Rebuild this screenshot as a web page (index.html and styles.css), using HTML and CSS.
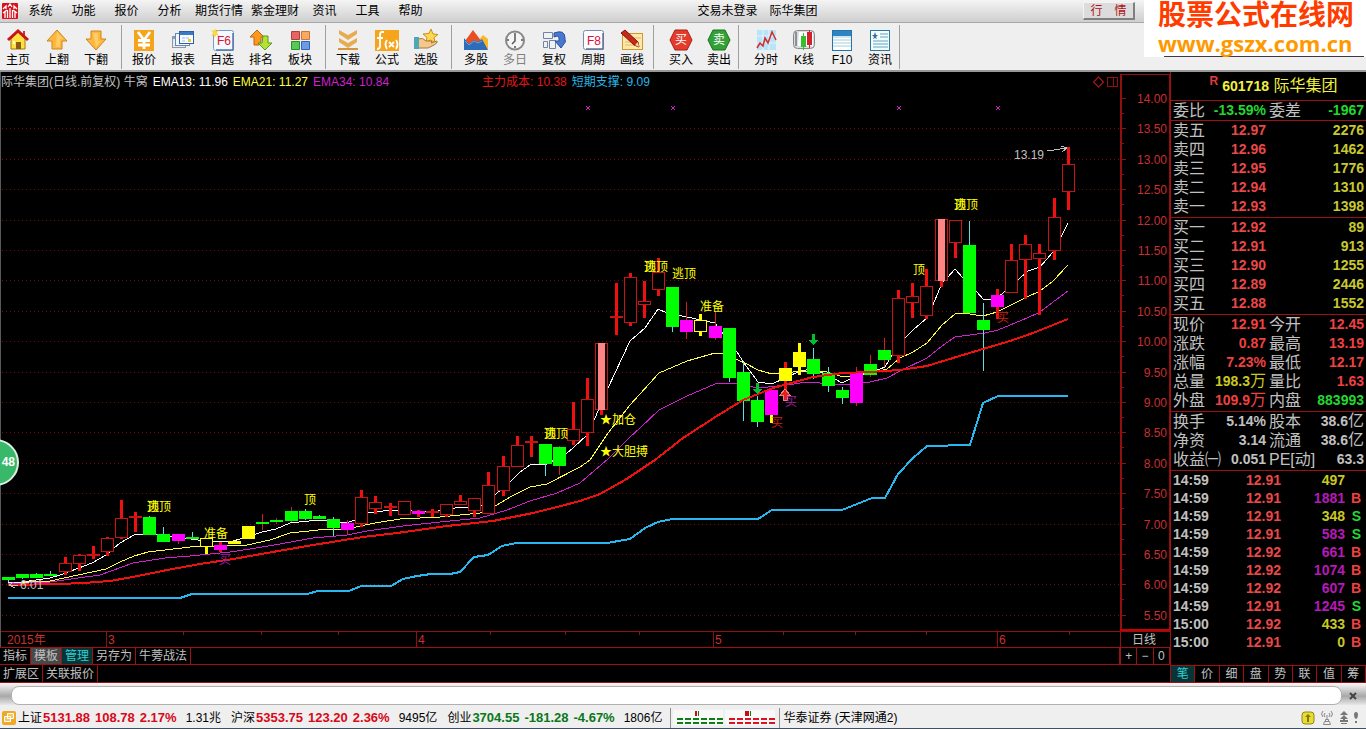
FILE: index.html
```
<!DOCTYPE html>
<html lang="zh-CN">
<head>
    <meta charset="UTF-8">
    <meta name="viewport" content="width=device-width, initial-scale=1.0">
    <title>际华集团 601718</title>
    <link rel="stylesheet" href="styles.css">
</head>
<body>
    <header class="menubar">
        <nav class="menu">
            <svg class="logo" viewBox="0 0 16 16" width="16" height="16">
                <rect width="16" height="16" rx="1" fill="#d8101c"/>
                <path d="M1 6l3-3v3M12 6V3l3 3M6 4l2-3 2 3M3 8v7M5.500 7v8M8 5v10M10.500 7v8M13 8v7M1 10l4-3M15 10l-4-3" fill="none" stroke="#fff" stroke-width="1.300"/>
            </svg>
            <a href="#">系统</a>
            <a href="#">功能</a>
            <a href="#">报价</a>
            <a href="#">分析</a>
            <a href="#">期货行情</a>
            <a href="#">紫金理财</a>
            <a href="#">资讯</a>
            <a href="#">工具</a>
            <a href="#">帮助</a>
        </nav>
        <div class="window-title"><span>交易未登录</span><span>际华集团</span></div>
        <button class="quote-btn" type="button">行　情</button>
    </header>

    <div class="toolbar">
        <div class="tool-group first">
            <button class="tool" type="button">
                <svg viewBox="0 0 24 24"><path d="M5 11v10h14V11l-7-7z" fill="#ffe23c" stroke="#a87808"/><path d="M10 21v-7h5v7z" fill="#8c5a14"/><path d="M7 13h2v3H7z" fill="#fff"/><path d="M17 3h2v5h-2z" fill="#c33"/><path d="M2 12L12 3l10 9" fill="none" stroke="#c8141c" stroke-width="3"/></svg>
                <span>主页</span>
            </button>
            <button class="tool" type="button">
                <svg viewBox="0 0 24 24"><path d="M12 2l10 11h-5v8H7v-8H2z" fill="#ffb83c" stroke="#d08418" stroke-linejoin="round"/><path d="M12 4l6 7h-3v8h-4z" fill="#ffd888" opacity=".6"/></svg>
                <span>上翻</span>
            </button>
            <button class="tool" type="button">
                <svg viewBox="0 0 24 24"><path d="M12 22L2 11h5V3h10v8h5z" fill="#ffb83c" stroke="#d08418" stroke-linejoin="round"/><path d="M9 5h5v8h3l-5 6z" fill="#ffd888" opacity=".6"/></svg>
                <span>下翻</span>
            </button>
        </div>
        <div class="tool-group">
            <button class="tool" type="button">
                <svg viewBox="0 0 24 24"><rect x="2" y="2" width="20" height="21" fill="#f6a41c"/><path d="M6 4l6 8 6-8M12 11v10M6 12.500h12M6 17h12" fill="none" stroke="#fff" stroke-width="2.800"/></svg>
                <span>报价</span>
            </button>
            <button class="tool" type="button">
                <svg viewBox="0 0 24 24"><rect x="1.500" y="8.500" width="13" height="11" fill="#e8ecf0" stroke="#8a98a8"/><path d="M2 9h12v2H2z" fill="#8aa0b8"/><rect x="4.500" y="5.500" width="14" height="12" fill="#f4f8fc" stroke="#6888b0"/><rect x="8.500" y="3.500" width="14" height="12" fill="#f8fcff" stroke="#2c60a8"/><path d="M9 4h13v3H9z" fill="#3c78c8"/><path d="M11 9h3v2h-3zM15 9h3v2h-3zM11 12h3v2h-3z" fill="#c8dcf4"/><path d="M17 11h3v3h-3z" fill="#f4c040"/></svg>
                <span>报表</span>
            </button>
            <button class="tool" type="button">
                <svg viewBox="0 0 24 24"><rect x="3.500" y="2.500" width="20" height="20" rx="2" fill="#f4f9ff" stroke="#7c9cc0"/><path d="M23 5v17H6" fill="none" stroke="#4c78ac" stroke-width="1.500"/><text x="7" y="17" class="key-text">F6</text><path d="M5 0l1 3 3-1-2 3 2 3-3-1-1 3-1-3-3 1 2-3-2-3 3 1z" fill="#ffd83c"/></svg>
                <span>自选</span>
            </button>
            <button class="tool" type="button">
                <svg viewBox="0 0 24 24"><path d="M8 2l7 7h-3v4l-2 4H5V9H1z" fill="#ff9818" stroke="#b8641c"/><path d="M14 8h5v7h4l-7 7-7-7h4z" fill="#b4e038" stroke="#58981c" stroke-linejoin="round"/></svg>
                <span>排名</span>
            </button>
            <button class="tool" type="button">
                <svg viewBox="0 0 24 24"><path d="M3.500 3.500h8v8h-8z" fill="#e86464" stroke="#b43c3c"/><path d="M13.500 3.500h8v8h-8z" fill="#f8a860" stroke="#c87830"/><path d="M3.500 13.500h8v8h-8z" fill="#58c858" stroke="#289028"/><path d="M13.500 13.500h8v8h-8z" fill="#6c9ce8" stroke="#3464b4"/></svg>
                <span>板块</span>
            </button>
        </div>
        <div class="tool-group">
            <button class="tool" type="button">
                <svg viewBox="0 0 24 24"><path d="M3 2l9 5 9-5v4l-9 6-9-6zM3 10l9 5 9-5v4l-9 6-9-6z" fill="#e8ac50"/><path d="M2 20h20v2H2z" fill="#d89438"/></svg>
                <span>下载</span>
            </button>
            <button class="tool" type="button">
                <svg viewBox="0 0 24 24"><rect y="2" width="24" height="21" fill="#f6a41c"/><path d="M9 4H7Q5 4 5 7v11q0 3-3 3M2 10h6M12 12q-3 4 0 9M21 12q3 4 0 9M14 14l5 5M19 14l-5 5" fill="none" stroke="#fff" stroke-width="1.800"/></svg>
                <span>公式</span>
            </button>
            <button class="tool" type="button">
                <svg viewBox="0 0 24 24"><path d="M17 1l2 5 5 .5-4 3 1 5-4.500-2.500L12 14l1-4.500-4-3.500 6-.500z" fill="#ffd850" stroke="#c89018"/><path d="M4 11q5-2 8 2h5q2 1 0 2l6-2q1 2-3 4l-6 3H4z" fill="#f4c88c" stroke="#a87840"/><path d="M0 9h5v12H0z" fill="#4ca8b8"/></svg>
                <span>选股</span>
            </button>
        </div>
        <div class="tool-group end-tight">
            <button class="tool" type="button">
                <svg viewBox="0 0 24 24"><path d="M13 14l6-7 5 4v10h-8z" fill="#f8b828"/><path d="M1 13l8-11 9 12v6H2z" fill="#e85024"/><path d="M0 10l5 6 5-4 4 2 4-3 6 11H0z" fill="#2c6cb8"/><path d="M1 13l4 4 5-4 4 2 4-2" fill="none" stroke="#6ca4e0"/></svg>
                <span>多股</span>
            </button>
            <button class="tool disabled" type="button">
                <svg viewBox="0 0 24 24"><circle cx="12" cy="12.500" r="9" fill="#f4f4f4" stroke="#888" stroke-width="2"/><path d="M12 6v7l-3 3M12 5v2M12 18v2M4 12h2M18 12h2" fill="none" stroke="#555" stroke-width="1.500"/></svg>
                <span>多日</span>
            </button>
            <button class="tool" type="button">
                <svg viewBox="0 0 24 24"><path d="M1.500 4.500h9v6h-9zM1.500 13.500h4v6h-4zM7.500 12.500h6v8h-6z" fill="#eef2f8" stroke="#7484a0"/><path d="M12 5q11-4 11 5v3h1l-5 7-6-7h4v-3q0-3-5-1z" fill="#4878d0" stroke="#2c50a0"/></svg>
                <span>复权</span>
            </button>
            <button class="tool" type="button">
                <svg viewBox="0 0 24 24"><rect x="2.500" y="2.500" width="20" height="19" rx="2" fill="#fafcff" stroke="#7c8ca8"/><path d="M22 5v16H5" fill="none" stroke="#5c7098" stroke-width="1.500"/><text x="6" y="17" class="key-text">F8</text></svg>
                <span>周期</span>
            </button>
            <button class="tool" type="button">
                <svg viewBox="0 0 24 24"><rect x="2.500" y="5.500" width="20" height="16" fill="#ffe8a8" stroke="#d0982c"/><path d="M5 14h12M5 17h14M9 10h12" stroke="#e0b860"/><path d="M1 5l4-3 13 12 1 5-5-2z" fill="#c8281c" stroke="#7c140c"/><path d="M15 17l4 2-1-5z" fill="#f8d8a0"/></svg>
                <span>画线</span>
            </button>
        </div>
        <div class="tool-group tight">
            <button class="tool" type="button">
                <svg viewBox="0 0 24 24"><path d="M6 2h12l5 10-5 10H6L1 12z" fill="#e43c2c" stroke="#a81c14"/><text x="6" y="16" class="sign-text">买</text></svg>
                <span>买入</span>
            </button>
            <button class="tool" type="button">
                <svg viewBox="0 0 24 24"><path d="M6 2h12l5 10-5 10H6L1 12z" fill="#34a038" stroke="#18701c"/><text x="6" y="16" class="sign-text">卖</text></svg>
                <span>卖出</span>
            </button>
        </div>
        <div class="tool-group tight">
            <button class="tool" type="button">
                <svg viewBox="0 0 24 24"><rect x="3" y="2" width="19" height="20" fill="#b8e4f8"/><path d="M9 2v20M15 2v20M3 8h19M3 15h19" stroke="#e4f6ff"/><path d="M3 20l3-5 3 3 2-8 3 5 4-11 4 8" fill="none" stroke="#d42c2c" stroke-width="1.500"/></svg>
                <span>分时</span>
            </button>
            <button class="tool" type="button">
                <svg viewBox="0 0 24 24"><rect x="1.500" y="2.500" width="21" height="18" rx="4" fill="#d8dce0" stroke="#888"/><path d="M7 4h14v14H6z" fill="#fff"/><path d="M9 8h5v11H9zM11 5h1v17h-1z" fill="#34c02c"/><path d="M15 4h5v13h-5zM17 2h1v18h-1z" fill="#d4202c"/><path d="M4 4v14" stroke="#444"/></svg>
                <span>K线</span>
            </button>
            <button class="tool" type="button">
                <svg viewBox="0 0 24 24"><rect x="2.500" y="2.500" width="19" height="20" fill="#fff" stroke="#2474ac"/><path d="M3 3h18v5H3z" fill="#2c84c0"/><path d="M3 12h18M3 15h18M3 18h18M3 9h18" stroke="#a4ccdc"/></svg>
                <span>F10</span>
            </button>
            <button class="tool" type="button">
                <svg viewBox="0 0 24 24"><rect x="2.500" y="2.500" width="19" height="20" fill="#f4fcff" stroke="#2c789c"/><path d="M12 6h8M12 9h8M5 13h15M5 16h15M5 19h15" stroke="#5ca4bc"/><path d="M7 4l1 3h2L8 9l1 2-2-1-2 1 1-2-2-2h2z" fill="#386c9c"/></svg>
                <span>资讯</span>
            </button>
        </div>
    </div>

    <main class="workspace">
        <section class="chart-pane">
            <div class="chart-legend">
                <span class="gray">际华集团(日线.前复权) 牛窝</span>
                <span class="white">EMA13: 11.96</span>
                <span class="yellow">EMA21: 11.27</span>
                <span class="purple">EMA34: 10.84</span>
                <span class="cost">主力成本: 10.38</span>
                <span class="cyan">短期支撑: 9.09</span>
            </div>
            <svg class="chart" viewBox="0 72 1170 575">
                <g id="grid"></g>
                <path d="M0 631.500H1170M1120.500 647v-16M106.500 631v16M416.500 631v16M713.500 631v16M997.500 631v16M183.500 631v4M261.500 631v4M338.500 631v4M490.500 631v4M565.500 631v4M639.500 631v4M783.500 631v4M855.500 631v4M926.500 631v4M1069.500 631v4" class="frame"/>
                <path d="M1120.500 631V74.500H1169.500V631" class="frame"/>
                <path d="M1120.500 74v557" class="frame" stroke-width="2"/>
                <path d="M1120 630h50" stroke="#c00" stroke-width="2"/>
                <path d="M1098.500 77l5 5-5 5-5-5zM1107.500 77.500h10v9h-10zM1113.500 77v10" class="frame"/>
                <path d="M0.500 72v575" stroke="#585858"/>

                <polyline class="line ema34" points="8,584 50,582 78,578 100,575 133,563 165,558 190,556 230,552 250,549 280,544 313,538 347,535 367,531 403,526 440,522 480,518 507,510 530,501 557,493 580,483 608,459 630,437 640,428 659,410 687,396 715,384 732,383 758,388 787,385 807,382 820,383 843,385 870,382 887,378 900,371 927,358 942,346 955,337 985,333 998,330 1027,318 1040,312 1053,302 1068,291"/>
                <polyline class="line ema21" points="8,583 50,581 78,575 106,569 120,562 134,556 148,552 190,547 247,545 270,540 290,533 318,530 346,529 375,523 400,519 440,517 480,513 497,505 510,497 530,487 547,484 580,467 590,460 608,433 630,405 659,373 687,361 715,353 723,354 745,363 758,370 772,374 780,373 807,371 827,372 843,377 870,373 887,369 900,358 913,352 927,343 942,325 955,314 963,313 983,316 997,312 1027,297 1040,291 1053,281 1068,265"/>
                <polyline class="line ema13" points="8,583 22,582 50,578 63,574 92,563 106,555 120,543 134,535 148,534 177,537 205,541 233,541 247,537 262,532 276,529 290,523 318,520 346,523 361,518 368,513 390,510 433,512 460,507 480,507 497,493 510,482 520,472 530,465 547,464 567,453 573,448 587,435 595,418 608,388 630,341 645,328 658,309 667,313 687,317 715,323 723,334 737,352 744,363 758,382 772,384 800,371 813,369 830,376 842,383 856,376 870,373 885,367 892,355 905,338 913,330 927,318 935,300 942,283 948,277 955,269 963,278 977,292 983,299 992,299 1002,294 1020,278 1028,271 1040,267 1053,252 1061,237 1068,223"/>

                <g id="candles"></g>

                <polyline class="line cost-line" points="8,585 60,584 83,583 110,581 133,577 167,570 200,564 233,559 267,553 307,546 363,537 397,533 447,526 493,521 533,513 557,507 580,501 600,494 625,480 655,460 683,438 717,416 743,400 773,388 813,377 843,373 870,372 900,370 927,366 953,358 983,349 1010,341 1033,333 1068,319"/>
                <polyline class="line support-line" points="8,598 180,598 192,594 307,594 318,591 349,591 361,586 391,586 403,579 417,576 431,574 450,574 460,572 474,557 488,555 502,546 516,543 607,543 630,539 645,528 658,522 672,519 758,519 772,510 842,510 857,504 872,498 885,498 898,474 913,458 927,446 970,445 983,403 998,396 1068,396"/>

                <!-- buy / sell arrows -->
                <path d="M756 383h3v6h3l-5 5-4-5h3zM812 334h3v6h3l-5 5-4-5h3z" fill="#00c030"/>
                <path d="M785 389l5 6h-3v5h-4v-5h-3z" fill="#e02020" stroke="#f08080"/>
                <path d="M586 106l4 4m0-4l-4 4M671 106l4 4m0-4l-4 4M897 106l4 4m0-4l-4 4M996 106l4 4m0-4l-4 4" stroke="#d020d0"/>
                <path d="M1047 151l20-3m-6-2l6 2-5 4M14 582l-5 3 6 3M9 585h9" fill="none" stroke="#c0c0c0"/>

                <g class="note">
                    <text x="147" y="511">逃顶</text><text x="147" y="511">顶</text>
                    <text x="304" y="504">顶</text>
                    <text x="204" y="538">准备</text>
                    <text x="544" y="438">逃顶</text><text x="544" y="438">顶</text>
                    <text x="644" y="271">逃顶</text><text x="644" y="271">顶</text>
                    <text x="672" y="278">逃顶</text>
                    <text x="700" y="311">准备</text>
                    <text x="600" y="424">★加仓</text>
                    <text x="600" y="456">★大胆搏</text>
                    <text x="913" y="274">顶</text>
                    <text x="954" y="209">逃顶</text><text x="954" y="209">顶</text>
                </g>
                <g class="buy">
                    <text x="219" y="564" class="buy-purple">买</text>
                    <text x="785" y="406" class="buy-purple">买</text>
                    <text x="771" y="427">买</text>
                    <text x="997" y="322">买</text>
                </g>
                <g class="extreme">
                    <text x="1014" y="159">13.19</text>
                    <text x="20" y="589">6.01</text>
                </g>
                <g class="axis-text">
                    <text x="7" y="644">2015年</text>
                    <text x="108" y="644">3</text>
                    <text x="418" y="644">4</text>
                    <text x="715" y="644">5</text>
                    <text x="999" y="644">6</text>
                </g>
                <text x="1132" y="644" class="period">日线</text>
            </svg>
            <div class="tab-row">
                <button type="button">指标</button>
                <button type="button" class="pressed">模板</button>
                <button type="button" class="active">管理</button>
                <button type="button">另存为</button>
                <button type="button">牛蒡战法</button>
                <div class="zoom-keys">
                    <button type="button">+</button>
                    <button type="button">−</button>
                    <button type="button">0</button>
                </div>
            </div>
            <div class="tab-row last">
                <button type="button">扩展区</button>
                <button type="button">关联报价</button>
            </div>
            <div class="badge">48</div>
        </section>

        <aside class="quote">
            <h1><sup>R</sup><b>601718</b> 际华集团</h1>
            <table class="pair">
                <tr><th>委比</th><td class="green">-13.59%</td><th>委差</th><td class="green">-1967</td></tr>
            </table>
            <table class="book">
                <tr><th>卖五</th><td>12.97</td><td>2276</td></tr>
                <tr><th>卖四</th><td>12.96</td><td>1462</td></tr>
                <tr><th>卖三</th><td>12.95</td><td>1776</td></tr>
                <tr><th>卖二</th><td>12.94</td><td>1310</td></tr>
                <tr><th>卖一</th><td>12.93</td><td>1398</td></tr>
            </table>
            <table class="book">
                <tr><th>买一</th><td>12.92</td><td>89</td></tr>
                <tr><th>买二</th><td>12.91</td><td>913</td></tr>
                <tr><th>买三</th><td>12.90</td><td>1255</td></tr>
                <tr><th>买四</th><td>12.89</td><td>2446</td></tr>
                <tr><th>买五</th><td>12.88</td><td>1552</td></tr>
            </table>
            <table class="pair spaced">
                <tr><th>现价</th><td class="red">12.91</td><th>今开</th><td class="red">12.45</td></tr>
                <tr><th>涨跌</th><td class="red">0.87</td><th>最高</th><td class="red">13.19</td></tr>
                <tr><th>涨幅</th><td class="red">7.23%</td><th>最低</th><td class="red">12.17</td></tr>
                <tr><th>总量</th><td class="olive">198.3<i>万</i></td><th>量比</th><td class="red">1.63</td></tr>
                <tr><th>外盘</th><td class="red">109.9<i>万</i></td><th>内盘</th><td class="green">883993</td></tr>
            </table>
            <table class="pair spaced">
                <tr><th>换手</th><td>5.14%</td><th>股本</th><td>38.6<i>亿</i></td></tr>
                <tr><th>净资</th><td>3.14</td><th>流通</th><td>38.6<i>亿</i></td></tr>
                <tr><th>收益㈠</th><td>0.051</td><th>PE[动]</th><td>63.3</td></tr>
            </table>
            <table class="ticks">
                <tr><td>14:59</td><td>12.91</td><td class="olive">497</td><td></td></tr>
                <tr><td>14:59</td><td>12.91</td><td class="big">1881</td><td class="b">B</td></tr>
                <tr><td>14:59</td><td>12.91</td><td class="olive">348</td><td class="s">S</td></tr>
                <tr><td>14:59</td><td>12.91</td><td class="big">583</td><td class="s">S</td></tr>
                <tr><td>14:59</td><td>12.92</td><td class="big">661</td><td class="b">B</td></tr>
                <tr><td>14:59</td><td>12.92</td><td class="big">1074</td><td class="b">B</td></tr>
                <tr><td>14:59</td><td>12.92</td><td class="big">607</td><td class="b">B</td></tr>
                <tr><td>14:59</td><td>12.91</td><td class="big">1245</td><td class="s">S</td></tr>
                <tr><td>15:00</td><td>12.92</td><td class="olive">433</td><td class="b">B</td></tr>
                <tr><td>15:00</td><td>12.91</td><td class="olive">0</td><td class="b">B</td></tr>
            </table>
            <div class="quote-tabs">
                <button type="button" class="active">笔</button>
                <button type="button">价</button>
                <button type="button">细</button>
                <button type="button">盘</button>
                <button type="button">势</button>
                <button type="button">联</button>
                <button type="button">值</button>
                <button type="button">筹</button>
            </div>
        </aside>
    </main>

    <div class="command">
        <input type="text" aria-label="命令">
        <button type="button" aria-label="关闭">
            <svg viewBox="0 0 8 8" width="8" height="8"><path d="M1 1l6 6M7 1L1 7" stroke="#444" stroke-width="2"/></svg>
        </button>
    </div>

    <footer class="status">
        <svg viewBox="0 0 14 14" width="14" height="14"><rect width="14" height="14" rx="2" fill="#f0a828"/><path d="M5.500 2.500h6v5h-6zM2.500 5.500h6v5h-6z" fill="#f8c860" stroke="#fff"/></svg>
        <div class="index up"><span>上证</span><b>5131.88</b><b>108.78</b><b>2.17%</b><span>1.31兆</span></div>
        <div class="index up"><span>沪深</span><b>5353.75</b><b>123.20</b><b>2.36%</b><span>9495亿</span></div>
        <div class="index down"><span>创业</span><b>3704.55</b><b>-181.28</b><b>-4.67%</b><span>1806亿</span></div>
        <div class="meters">
            <svg viewBox="0 0 104 18" width="104" height="18">
                <path d="M0 1h50v15H0zM52 1h50v15H52z" fill="#f8f8f8"/>
                <path d="M4 10h46M4 14h46" stroke="#0a8010" stroke-width="2" stroke-dasharray="6 2"/>
                <path d="M56 10h46M56 14h46" stroke="#e01020" stroke-width="2" stroke-dasharray="6 2"/>
                <path d="M22 2h2v5h-2zM72 2h4v5h-4z" fill="#c01010"/>
                <path d="M25 2h1v5h-1zM77 2h1v5h-1z" fill="#207020"/>
            </svg>
        </div>
        <span class="broker">华泰证券 (天津网通2)</span>
        <div class="tray">
            <svg viewBox="0 0 14 14" width="14" height="14"><rect x="1" y="1" width="12" height="12" rx="3" fill="#e8dc30" stroke="#908818"/><path d="M7 3l3 3H8v5H6V6H4z" fill="#807810"/></svg>
            <svg viewBox="0 0 14 16" width="14" height="16"><path d="M7 5v4M5.500 9.500h3v2h-3zM4.500 11.500h5l1 3h-7zM5 3q-2 2 0 4M9 3q2 2 0 4M3 1Q0 4 3 7M11 1q3 3 0 6" fill="none" stroke="#888"/></svg>
            <svg viewBox="0 0 10 14" width="10" height="14"><path d="M5 0l4 4H1zM5 4l4 4H1zM4 8h2v1h3v2H1V9h3zM2 12h6v1H2z" fill="#777"/></svg>
            <svg viewBox="0 0 4 14" width="4" height="14"><path d="M2 1q2 0 2 3T2 8Q0 7 0 4t2-3zM1 10h2v2H1z" fill="#777"/></svg>
        </div>
    </footer>

    <div class="site-mark">
        <strong>股票公式在线网</strong>
        <em>www.gszx.com.cn</em>
    </div>

    <script>
        const NS = 'http://www.w3.org/2000/svg';
        const grid = document.getElementById('grid');
        const candles = document.getElementById('candles');

        function add(parent, tag, attrs, text) {
            const el = document.createElementNS(NS, tag);
            for (const key in attrs) el.setAttribute(key, attrs[key]);
            if (text) el.textContent = text;
            parent.appendChild(el);
        }

        // price scale, 14.00 down to 5.50
        for (let i = 0; i < 18; i++) {
            const y = 98 + Math.round(i * 30.4);
            if (i > 0) {
                add(grid, 'path', { d: `M2 ${y + 0.5}H1119`, class: 'grid-line' });
            }
            add(grid, 'path', { d: `M1122 ${y + 0.5}h4M1122 ${y + 15.5}h2`, class: 'frame' });
            add(grid, 'text', { x: 1167, y: y + 5, class: 'price' }, (14 - i * 0.5).toFixed(2));
        }

        // kind: [body fill, body stroke, wick colour, wick width]
        const kinds = {
            r: ['#000', '#c81414', '#f01010', 3],
            g: ['#00ff00', '#00ff00', '#60e0e0', 1],
            G: ['#00ff00', '#00ff00', '#d02020', 1],
            m: ['#ff00ff', '#ff00ff', '#d02020', 1],
            M: ['#ff00ff', '#ff00ff', '#f01010', 3],
            n: ['#ff00ff', '#ff00ff', '#ffff00', 3],
            h: ['#000', '#ffff00', '#ffff00', 3],
            y: ['#ffff00', '#ffff00', '#ffff00', 3],
            Y: ['#ffff00', '#ffff00', '#f01010', 3],
            p: ['#000', '#c81414', '#f01010', 3]
        };

        // kind, high, body top, body bottom, low
        const data = [
            ['g', 577, 577, 580, 582], ['g', 574, 574, 578, 579], ['g', 573, 574, 578, 578], ['g', 571, 574, 575, 575],
            ['r', 557, 563, 572, 575], ['r', 554, 555, 564, 571], ['r', 546, 554, 556, 559], ['r', 537, 538, 552, 556],
            ['r', 500, 518, 538, 539], ['r', 512, 516, 518, 532], ['g', 516, 517, 535, 535], ['g', 527, 534, 542, 542],
            ['m', 534, 534, 541, 544], ['g', 532, 537, 539, 539], ['h', 538, 538, 547, 554], ['M', 542, 545, 550, 552],
            ['y', 541, 541, 544, 544], ['y', 526, 526, 539, 539], ['G', 514, 522, 524, 530], ['G', 518, 520, 522, 524],
            ['G', 507, 511, 521, 522], ['g', 509, 511, 519, 520], ['g', 515, 516, 519, 519], ['g', 517, 519, 528, 536],
            ['m', 520, 523, 530, 534], ['r', 490, 497, 524, 527], ['r', 496, 502, 509, 514], ['r', 503, 506, 508, 516],
            ['r', 501, 501, 515, 515], ['M', 510, 511, 514, 517], ['r', 509, 511, 513, 517], ['r', 504, 504, 515, 517],
            ['r', 495, 501, 505, 505], ['r', 498, 498, 511, 517], ['r', 472, 485, 514, 514], ['r', 456, 466, 491, 496],
            ['r', 436, 445, 467, 467], ['r', 436, 441, 443, 457], ['g', 444, 444, 464, 476], ['G', 446, 447, 466, 475],
            ['r', 402, 429, 441, 445], ['r', 378, 399, 433, 446], ['p', 343, 343, 410, 415], ['r', 283, 316, 318, 335],
            ['r', 273, 277, 323, 326], ['r', 281, 301, 305, 318], ['r', 258, 272, 290, 296], ['g', 287, 287, 327, 332],
            ['m', 302, 320, 332, 339], ['h', 314, 320, 332, 336], ['m', 312, 326, 338, 340], ['g', 328, 328, 378, 382],
            ['g', 362, 372, 401, 421], ['g', 396, 400, 422, 427], ['n', 390, 390, 415, 423], ['Y', 362, 368, 381, 392],
            ['y', 343, 352, 367, 375], ['g', 348, 359, 374, 379], ['g', 367, 373, 386, 392], ['g', 387, 390, 398, 404],
            ['m', 367, 372, 403, 406], ['G', 355, 364, 375, 377], ['G', 338, 350, 360, 367], ['r', 290, 298, 356, 363],
            ['r', 283, 296, 303, 318], ['r', 269, 286, 316, 319], ['p', 219, 219, 281, 287], ['r', 220, 220, 243, 258],
            ['g', 221, 245, 313, 313], ['g', 303, 320, 330, 371], ['M', 289, 295, 307, 319], ['r', 244, 260, 293, 293],
            ['r', 235, 244, 260, 299], ['r', 244, 253, 259, 315], ['r', 198, 217, 251, 260], ['r', 147, 164, 192, 210]
        ];

        data.forEach(([kind, high, top, bottom, low], i) => {
            const [fill, stroke, wick, size] = kinds[kind];
            const x = 8 + Math.round(i * 14.13);
            add(candles, 'path', { d: `M${x + 0.5} ${high}V${low}`, stroke: wick, 'stroke-width': size });
            add(candles, 'rect', { x: x - 5.5, y: top + 0.5, width: 12, height: Math.max(bottom - top - 1, 1), fill, stroke });
            if (kind === 'p') {
                add(candles, 'rect', { x: x - 3, y: top, width: 7, height: bottom - top, fill: '#ff8484' });
            }
        });
    </script>
</body>
</html>
```
FILE: styles.css
```
* {
    box-sizing: border-box;
}

body {
    margin: 0;
    min-height: 100vh;
    display: flex;
    flex-direction: column;
    position: relative;
    background: #efefef;
    color: #000;
    font-family: "Liberation Sans", "Noto Sans CJK SC", sans-serif;
    font-size: 12px;
    line-height: 16px;
}

button {
    font: inherit;
    color: inherit;
    background: none;
    border: 0;
    padding: 0;
    cursor: pointer;
    white-space: nowrap;
}

/* menu bar */
.menubar {
    height: 23px;
    display: flex;
    align-items: center;
    justify-content: space-between;
    padding-right: 231px;
    background: linear-gradient(#f4f4f4, #cfcfcf);
    border-bottom: 1px solid #a8a8a8;
}

.menu {
    display: flex;
    align-items: center;
}

.logo {
    margin: 0 1px 0 2px;
}

.menu a {
    min-width: 43px;
    padding: 0 4px;
    text-align: center;
    color: #000;
    text-decoration: none;
}

.window-title {
    display: flex;
    gap: 12px;
}

.quote-btn {
    width: 52px;
    height: 18px;
    line-height: 16px;
    color: #b01018;
    background: #dcdcdc;
    border: 1px solid #f4f4f4;
    border-right: 2px solid #808080;
    border-bottom: 2px solid #808080;
}

/* toolbar */
.toolbar {
    height: 49px;
    display: flex;
    padding: 2px 0 1px;
    background: #efefef;
    border-bottom: 2px solid #989898;
}

.tool-group {
    display: flex;
    gap: 3px;
    padding: 0 7px 0 4px;
    border-right: 1px solid #a0a0a0;
}

.tool-group.first {
    padding-left: 0;
}

.tool-group.end-tight {
    padding: 0 3px 0 6px;
}

.tool-group.tight {
    gap: 2px;
    padding: 0 1px 0 9px;
}

.tool {
    width: 36px;
    display: flex;
    flex-direction: column;
    align-items: center;
    padding-top: 3px;
}

.tool svg {
    width: 24px;
    height: 24px;
}

.tool.disabled {
    color: #808080;
}

.key-text {
    font-size: 12px;
    fill: #e01030;
}

.sign-text {
    font-size: 12px;
    fill: #fff;
}

/* workspace */
.workspace {
    flex: 1;
    display: flex;
    background: #000;
    color: #c0c0c0;
}

.chart-pane {
    flex: 1;
    min-width: 0;
    position: relative;
    border-bottom: 1px solid #a01010;
}

.chart-legend {
    position: absolute;
    top: 2px;
    left: 1px;
    display: flex;
    gap: 5px;
    white-space: nowrap;
}

.chart-legend .cost {
    margin-left: 88px;
    color: #e01818;
}

.gray {
    color: #c0c0c0;
}

.white {
    color: #fff;
}

.yellow {
    color: #ffff40;
}

.purple {
    color: #d020d0;
}

.cyan {
    color: #28b8e8;
}

.chart {
    display: block;
    width: 100%;
    height: auto;
}

.chart path,
.chart rect,
.chart polyline {
    shape-rendering: crispEdges;
}

.frame {
    fill: none;
    stroke: #901010;
}

.grid-line {
    stroke: #780808;
    stroke-dasharray: 1 3;
}

.price {
    fill: #c83030;
    text-anchor: end;
}

.line {
    fill: none;
}

.ema13 {
    stroke: #fff;
}

.ema21 {
    stroke: #ffff40;
}

.ema34 {
    stroke: #d020d0;
}

.cost-line {
    stroke: #f01010;
    stroke-width: 2;
}

.support-line {
    stroke: #28b8f0;
    stroke-width: 2;
}

.note {
    fill: #ffff00;
}

.buy {
    fill: #d02010;
}

.buy .buy-purple {
    fill: #a020a0;
}

.extreme,
.period {
    fill: #c0c0c0;
}

.axis-text {
    fill: #c83030;
}

.tab-row {
    display: flex;
    height: 17px;
    border-top: 1px solid #a01010;
}

.tab-row.last {
    height: 18px;
}

.tab-row button {
    padding: 0 3px;
    line-height: 16px;
    border-right: 1px solid #a01010;
}

.tab-row .pressed {
    background: #484848;
}

.tab-row .active,
.quote-tabs .active {
    color: #30d0d0;
    background: #083438;
}

.zoom-keys {
    display: flex;
    margin-left: auto;
    width: 51px;
    border-left: 2px solid #a01010;
}

.zoom-keys button {
    flex: 1;
}

.badge {
    position: absolute;
    left: -28px;
    top: 367px;
    width: 47px;
    height: 47px;
    padding-right: 2px;
    line-height: 43px;
    text-align: right;
    font-weight: bold;
    color: #fff;
    background: #38b868;
    border: 2px solid #d8f0e0;
    border-radius: 50%;
}

/* quote panel */
.quote {
    width: 196px;
    display: flex;
    flex-direction: column;
    border-left: 1px solid #a01010;
    border-bottom: 1px solid #a01010;
}

.quote h1 {
    margin: 0;
    height: 29px;
    line-height: 28px;
    text-align: center;
    padding-left: 10px;
    font-size: 16px;
    font-weight: normal;
    color: #f0f040;
    border-bottom: 1px solid #a01010;
}

.quote h1 b {
    font-size: 14px;
}

.quote h1 sup {
    margin-right: 4px;
    font-size: 12px;
    font-weight: bold;
    line-height: 1;
    color: #e03c3c;
}

.quote table {
    width: 100%;
    table-layout: fixed;
    border-collapse: separate;
    border-spacing: 0;
    padding: 0 2px;
    border-bottom: 1px solid #a01010;
}

.quote th,
.quote td {
    height: 19px;
    padding: 0;
    line-height: 19px;
    white-space: nowrap;
}

.quote th {
    width: 36px;
    text-align: left;
    font-size: 16px;
    font-weight: normal;
}

.quote td {
    text-align: right;
    font-size: 14px;
    font-weight: bold;
}

.quote td i {
    font-size: 16px;
    font-style: normal;
    font-weight: normal;
    line-height: 1;
}

.quote .pair td:nth-child(2) {
    width: 60px;
    padding-right: 3px;
}

.quote .book {
    padding-bottom: 1px;
}

.quote .book td:nth-child(2) {
    width: 57px;
    color: #e84848;
}

.quote .book td:nth-child(3) {
    color: #c8c830;
}

.quote .spaced {
    padding-bottom: 1px;
}

.quote .ticks {
    border-bottom: 0;
}

.quote .ticks td {
    height: 18px;
    line-height: 18px;
}

.quote .ticks td:nth-child(1) {
    width: 40px;
    text-align: left;
}

.quote .ticks td:nth-child(2) {
    width: 68px;
    color: #e84848;
}

.quote .ticks td:nth-child(4) {
    width: 19px;
    padding-right: 3px;
}

.quote .red,
.quote .b {
    color: #f04040;
}

.quote .green,
.quote .s {
    color: #20d830;
}

.quote .olive {
    color: #c8c820;
}

.quote .big {
    color: #b818b8;
}

.quote-tabs {
    display: flex;
    height: 17px;
    margin-top: auto;
    border-top: 1px solid #a01010;
}

.quote-tabs button {
    flex: 1;
    line-height: 16px;
    border-right: 1px solid #a01010;
}

/* command line */
.command {
    display: flex;
    height: 22px;
    padding: 3px 2px 0 0;
    background: linear-gradient(#fafafa, #a8a8a8 60%, #e8e8e8);
}

.command input {
    flex: 1;
    min-width: 0;
    height: 19px;
    margin-left: 11px;
    padding: 0 8px;
    border: 1px solid #b0b0b0;
    border-radius: 8px;
    background: #fff;
    outline: none;
}

.command button {
    width: 22px;
    line-height: 16px;
}

/* status bar */
.status {
    height: 24px;
    display: flex;
    align-items: center;
    padding: 2px 8px 0 2px;
    white-space: nowrap;
    border-bottom: 1px solid #405060;
}

.index {
    display: flex;
    align-items: center;
    gap: 5px;
    margin-right: 8px;
}

.index span:first-child {
    margin: 0 -4px 0 2px;
}

.index span:last-child {
    margin-left: 4px;
}

.index b {
    font-size: 13px;
}

.up b {
    color: #d80818;
}

.down b {
    color: #087818;
}

.meters {
    height: 20px;
    padding: 1px 2px;
    border-left: 1px solid #909090;
    border-right: 1px solid #909090;
}

.broker {
    margin-left: 3px;
}

.tray {
    display: flex;
    align-items: center;
    gap: 5px;
    margin-left: auto;
}

/* site name over the window corner */
.site-mark {
    position: absolute;
    top: 0;
    right: 0;
    width: 222px;
    height: 57px;
    padding: 2px 2px 0 14px;
    background: #fff;
    white-space: nowrap;
}

.site-mark::after {
    content: "";
    display: block;
    margin-left: 6px;
    border-top: 1px solid #403840;
}

.site-mark strong,
.site-mark em {
    display: block;
    font-style: normal;
    font-weight: bold;
}

.site-mark strong {
    font-size: 28px;
    line-height: 28px;
    color: #ff3c00;
}

.site-mark em {
    font-family: "Open Sans", sans-serif;
    font-size: 22px;
    line-height: 26px;
    color: #ff9900;
}
```
